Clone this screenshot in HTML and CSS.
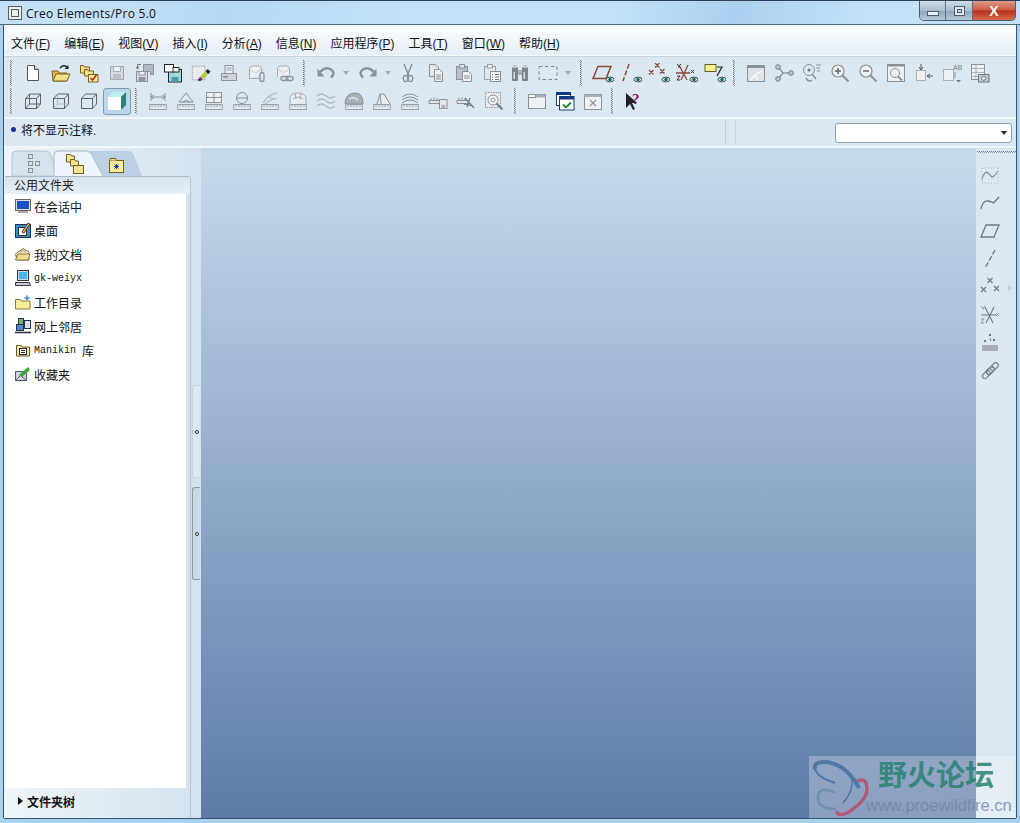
FILE: index.html
```html
<!DOCTYPE html>
<html lang="zh-CN">
<head>
  <meta charset="UTF-8">
  <title>Creo Elements/Pro 5.0</title>
  <link rel="stylesheet" href="styles.css">
</head>
<body>

<!-- icon sprite -->
<svg class="sprite" xmlns="http://www.w3.org/2000/svg">
  <symbol id="eye" viewBox="0 0 20 20"><ellipse cx="16" cy="16.5" rx="4" ry="2.4" fill="#cfe0dc" stroke="#2d5a52"/><circle cx="16" cy="16.5" r="1.7" fill="#1f6b5c"/></symbol>

  <symbol id="new" viewBox="0 0 20 20"><path d="M4.5 2.5h7l4 4v11h-11z" fill="#fff" stroke="#555"/><path d="M11.5 2.5v4h4" fill="#ddd" stroke="#555"/></symbol>
  <symbol id="open" viewBox="0 0 20 20"><path d="M1 8h6l1 2h8v8H2z" fill="#d9b548" stroke="#7a6420"/><path d="M2 18l3-7h14l-3 7z" fill="#f7e08a" stroke="#7a6420"/><path d="M9 5q3-4 7-1" fill="none" stroke="#222" stroke-width="1.4"/><path d="M17.5 2v4h-4z" fill="#222"/></symbol>
  <symbol id="workdir" viewBox="0 0 20 20"><path d="M1.5 2.5h3l1 1.5h5v6h-9z" fill="#f1de88" stroke="#7a6420"/><path d="M5.5 6.5h3l1 1.5h5v5h-9z" fill="#f4e28e" stroke="#7a6420"/><rect x="9.5" y="11.5" width="9.5" height="7.5" fill="#f8eea8" stroke="#7a6420"/><path d="M11.5 15l2 2 4-5" fill="none" stroke="#c0280f" stroke-width="1.6"/></symbol>
  <symbol id="save" viewBox="0 0 20 20"><path d="M3.5 3.5h13v13h-13z" fill="#d5dbe0" stroke="#9aa2a8"/><rect x="6.5" y="3.5" width="7" height="5" fill="#eef1f3" stroke="#a6adb3"/><rect x="6" y="11" width="8" height="5.5" fill="#b8bfc5"/></symbol>
  <symbol id="savecopy" viewBox="0 0 20 20"><path d="M8.5 1.5h10v10h-3v-3h-7z" fill="#b3babf" stroke="#8a9298"/><rect x="1.5" y="8.5" width="11" height="10" fill="#d5dbe0" stroke="#8a9298"/><rect x="4" y="8.5" width="6" height="3.5" fill="#eef1f3" stroke="#8a9298"/><rect x="3.5" y="14" width="7" height="4.5" fill="#8f979d"/><path d="M6 1.5H2.5v3" fill="none" stroke="#777"/><path d="M.5 4h4l-2 2.5z" fill="#777"/></symbol>
  <symbol id="backup" viewBox="0 0 20 20"><rect x="5.5" y="6.5" width="13" height="12.5" fill="#9fdcde" stroke="#222"/><rect x="8.5" y="14" width="7" height="5" fill="#4e9ca6"/><rect x="1.5" y="1.5" width="9" height="7.5" fill="#fff" stroke="#222"/><rect x="10" y="4.5" width="6" height="4.5" fill="#fff" stroke="#222"/></symbol>
  <symbol id="rename" viewBox="0 0 22 20"><rect x="1.5" y="2.5" width="14" height="15" fill="#e9ecef" stroke="#999" stroke-dasharray="1.5 1"/><path d="M7 18l3-4 3 3-3 2z" fill="#5b2b8e"/><path d="M10 14l6-6 3 3-6 6z" fill="#b8c93a"/><path d="M16 8l2.5-2.5 3 3L19 11z" fill="#222"/></symbol>
  <symbol id="print" viewBox="0 0 20 20"><rect x="6" y="2.5" width="8" height="8" fill="#eef1f3" stroke="#8a9298"/><path d="M7.5 5h5M7.5 7h5" stroke="#9aa2a8"/><path d="M2.5 10.5h15v7h-15z" fill="#cdd3d8" stroke="#8a9298"/><rect x="4" y="13" width="5" height="1.5" fill="#8a9298"/></symbol>
  <symbol id="mail" viewBox="0 0 20 20"><path d="M2.5 16V6q0-3 3-3h6q3 0 3 3v4" fill="#eef1f3" stroke="#a6adb3"/><path d="M2.5 15.5h10" stroke="#a6adb3"/><path d="M2.5 6l6 4 6-4" fill="none" stroke="#c2c8cd"/><rect x="13" y="9.5" width="4" height="9" rx="2" fill="none" stroke="#8a9298" stroke-width="1.3"/></symbol>
  <symbol id="maillink" viewBox="0 0 20 20"><path d="M2.5 14V6q0-3 3-3h6q3 0 3 3v6" fill="#eef1f3" stroke="#a6adb3"/><path d="M2.5 6l6 4 6-4" fill="none" stroke="#c2c8cd"/><rect x="6" y="13.5" width="7" height="4" rx="2" fill="none" stroke="#8a9298" stroke-width="1.3"/><rect x="11" y="13.5" width="7" height="4" rx="2" fill="none" stroke="#8a9298" stroke-width="1.3"/></symbol>
  <symbol id="undo" viewBox="0 0 20 20"><path d="M4 9q6-6 11-2.5t0 8" fill="none" stroke="#8a9298" stroke-width="2.4"/><path d="M1.5 5.5v8h7z" fill="#8a9298"/></symbol>
  <symbol id="redo" viewBox="0 0 20 20"><path d="M16 9q-6-6-11-2.5t0 8" fill="none" stroke="#8a9298" stroke-width="2.4"/><path d="M18.5 5.5v8h-7z" fill="#8a9298"/></symbol>
  <symbol id="cut" viewBox="0 0 20 20"><path d="M6 1l5 12M14 1L9 13" stroke="#8a9298" stroke-width="1.5" fill="none"/><ellipse cx="7.5" cy="15.5" rx="2.2" ry="3.2" fill="none" stroke="#8a9298" stroke-width="1.3"/><ellipse cx="12.5" cy="15.5" rx="2.2" ry="3.2" fill="none" stroke="#8a9298" stroke-width="1.3"/></symbol>
  <symbol id="copy" viewBox="0 0 20 20"><path d="M3.5 1.5h6l3 3v9h-9z" fill="#e3e7ea" stroke="#8a9298"/><path d="M8.5 6.5h5l3 3v9h-8z" fill="#eef1f3" stroke="#8a9298"/><path d="M10 12h5M10 14h5M10 16h5" stroke="#8a9298"/></symbol>
  <symbol id="paste" viewBox="0 0 20 20"><rect x="2.5" y="3.5" width="11" height="13" fill="#b8bfc5" stroke="#8a9298"/><rect x="5.5" y="1.5" width="5" height="3.5" fill="#dde2e6" stroke="#8a9298"/><path d="M8.5 8.5h6l3 3v7h-9z" fill="#eef1f3" stroke="#8a9298"/><path d="M10 13h6M10 15h6" stroke="#8a9298"/></symbol>
  <symbol id="pastesp" viewBox="0 0 20 20"><rect x="2.5" y="3.5" width="11" height="13" fill="#e3e7ea" stroke="#9aa2a8"/><rect x="5.5" y="1.5" width="5" height="3.5" fill="#eef1f3" stroke="#9aa2a8"/><rect x="8.5" y="8.5" width="10" height="10" fill="#f2f4f6" stroke="#8a9298"/><path d="M10.5 11v1M10.5 13.5v1M10.5 16v1M13 11.5h4M13 14h4M13 16.5h4" stroke="#707a80"/></symbol>
  <symbol id="find" viewBox="0 0 20 20"><rect x="2" y="4" width="6" height="14" rx="1" fill="#7d858b"/><rect x="12" y="4" width="6" height="14" rx="1" fill="#7d858b"/><rect x="8" y="7" width="4" height="5" fill="#aab1b6"/><rect x="3" y="2" width="4" height="3" fill="#c2c8cd"/><rect x="13" y="2" width="4" height="3" fill="#c2c8cd"/><rect x="3.5" y="9" width="1.5" height="7" fill="#d5dbe0"/><rect x="13.5" y="9" width="1.5" height="7" fill="#d5dbe0"/></symbol>
  <symbol id="selbox" viewBox="0 0 20 20"><rect x="1" y="3.5" width="18" height="13" fill="none" stroke="#7f878d" stroke-dasharray="3.5 2.5"/></symbol>

  <symbol id="dplane" viewBox="0 0 22 20"><path d="M6 3.5h13l-5 12H1z" fill="none" stroke="#8a4a34" stroke-width="1.5"/><use href="#eye" x="2" y="0" width="20" height="20"/></symbol>
  <symbol id="daxis" viewBox="0 0 22 20"><path d="M9 1L3 18" stroke="#8a4a34" stroke-width="1.5" stroke-dasharray="5 2"/><use href="#eye" x="2" y="0" width="20" height="20"/></symbol>
  <symbol id="dpoint" viewBox="0 0 22 20"><path d="M7 0l4.500 4.500M11.500 0L7 4.500M1 7l4.500 4.500M5.500 7L1 11.500M12 6l4.500 4.500M16.500 6L12 10.500" stroke="#8a4a34" stroke-width="1.3"/><use href="#eye" x="2" y="0" width="20" height="20"/></symbol>
  <symbol id="dcsys" viewBox="0 0 22 20"><path d="M0 10h14M3 2l8 15M12 2L5 17" stroke="#8a4a34" stroke-width="1.3"/><path d="M1 1l2 2 2-2M3 3v2M1 13h3l-3 4h3" fill="none" stroke="#333"/><path d="M15 7l3 3M18 7l-3 3" stroke="#333"/><use href="#eye" x="2" y="0" width="20" height="20"/></symbol>
  <symbol id="dnote" viewBox="0 0 22 20"><rect x="1" y="1.5" width="11" height="7" fill="#f8f28e" stroke="#665f20"/><path d="M13 4h5l-5 9" fill="none" stroke="#222" stroke-width="1.2"/><use href="#eye" x="2" y="0" width="20" height="20"/></symbol>

  <symbol id="repaint" viewBox="0 0 20 20"><rect x="1.5" y="2.5" width="17" height="16" fill="#dfe3e6" stroke="#8a9298"/><rect x="1.5" y="2.5" width="17" height="2.5" fill="#8a9298"/><path d="M5 17l5-6 7-3M9 12l3 5" fill="none" stroke="#fff" stroke-width="1.3"/></symbol>
  <symbol id="tree" viewBox="0 0 20 20"><circle cx="4" cy="4" r="2.3" fill="#c2c8cd" stroke="#707a80"/><circle cx="4" cy="16" r="2.3" fill="#c2c8cd" stroke="#707a80"/><circle cx="17" cy="10" r="2.3" fill="#c2c8cd" stroke="#707a80"/><path d="M5.5 5.500L9 10h6M9 10l-3.500 4.500" fill="none" stroke="#707a80" stroke-width="1.2"/></symbol>
  <symbol id="spin" viewBox="0 0 20 20"><circle cx="7" cy="7" r="5.500" fill="none" stroke="#8a9298"/><circle cx="7" cy="7" r="1.5" fill="#707a80"/><path d="M14 2h5M14 5h4M15 8h3" stroke="#8a9298"/><path d="M10 11l4 5" stroke="#8a9298" stroke-width="1.5"/><path d="M4 15q3 5 6 2" fill="none" stroke="#8a9298" stroke-width="1.5"/></symbol>
  <symbol id="zoomin" viewBox="0 0 20 20"><circle cx="8" cy="8" r="6" fill="#eef1f3" stroke="#8a9298" stroke-width="1.2"/><path d="M5 8h6M8 5v6" stroke="#666" stroke-width="1.5"/><path d="M12.5 12.5l6 6" stroke="#8a9298" stroke-width="2"/></symbol>
  <symbol id="zoomout" viewBox="0 0 20 20"><circle cx="8" cy="8" r="6" fill="#eef1f3" stroke="#8a9298" stroke-width="1.2"/><path d="M5 8h6" stroke="#666" stroke-width="1.5"/><path d="M12.5 12.5l6 6" stroke="#8a9298" stroke-width="2"/></symbol>
  <symbol id="refit" viewBox="0 0 20 20"><rect x="1.5" y="1.5" width="17" height="17" fill="#eef1f3" stroke="#8a9298"/><rect x="1.5" y="1.5" width="17" height="2" fill="#8a9298"/><circle cx="9" cy="10" r="4.5" fill="none" stroke="#8a9298"/><path d="M12 13.5l4 4" stroke="#8a9298" stroke-width="1.8"/></symbol>
  <symbol id="orient" viewBox="0 0 20 20"><rect x="2.5" y="7.5" width="9" height="10" fill="#eef1f3" stroke="#aab1b6"/><path d="M7 1v5M5 4l2 3 2-3M19 13h-5M16 11l-3 2 3 2" fill="none" stroke="#555"/></symbol>
  <symbol id="views" viewBox="0 0 20 20"><rect x="1.5" y="6.5" width="10" height="11" fill="#eef1f3" stroke="#aab1b6"/><path d="M13 9v6" stroke="#8a9298"/><path d="M14 17h5l-2.5 2.5z" fill="#707a80"/></symbol>
  <symbol id="layers" viewBox="0 0 20 20"><rect x="1.5" y="1.5" width="13" height="15" fill="#eef1f3" stroke="#8a9298"/><path d="M1.5 5.5h13M1.5 9.5h13M1.5 13.5h13M6 1.5v15" stroke="#aab1b6"/><rect x="8.5" y="11.5" width="10.5" height="7.5" fill="#c2c8cd" stroke="#707a80"/><circle cx="13.7" cy="15.3" r="2" fill="#eef1f3" stroke="#707a80"/></symbol>

  <symbol id="cube-wire" viewBox="0 0 20 20"><path d="M2.5 7.5h11v10h-11zM2.5 7.5l4-4.5h11v10l-4 4.5M13.5 7.5l4-4.5M6.5 3v10h11M6.5 13l-4 4.5" fill="none" stroke="#555" stroke-width=".9"/></symbol>
  <symbol id="cube-hid" viewBox="0 0 20 20"><path d="M2.5 7.5h11v10h-11zM2.5 7.5l4-4.5h11v10l-4 4.5M13.5 7.5l4-4.5" fill="none" stroke="#555" stroke-width=".9"/><path d="M6.5 3v10h11M6.5 13l-4 4.5" fill="none" stroke="#aab1b6" stroke-width=".9"/></symbol>
  <symbol id="cube-line" viewBox="0 0 20 20"><path d="M2.5 7.5h11v10h-11zM2.5 7.5l4-4.5h11v10l-4 4.5M13.5 7.5l4-4.5" fill="none" stroke="#555" stroke-width=".9"/></symbol>
  <symbol id="cube-shade" viewBox="0 0 20 20"><path d="M1 6h13v13H1z" fill="#fff"/><path d="M1 6l4-5h14l-5 5z" fill="#bfeeee"/><path d="M14 6l5-5v13l-5 5z" fill="#2f7f7a"/></symbol>

  <symbol id="ruler" viewBox="0 0 20 20"><path d="M1.5 13.5h17v5h-17z" fill="#e3e8ec" stroke="#9aa2a8"/><path d="M4 14v2M7 14v2M10 14v2M13 14v2M16 14v2" stroke="#9aa2a8"/></symbol>
  <symbol id="m-dim" viewBox="0 0 20 20"><path d="M3 2v8M17 2v8M3 6h14M3 6l3-2M3 6l3 2M17 6l-3-2M17 6l-3 2" fill="none" stroke="#8a9298"/><use href="#ruler"/></symbol>
  <symbol id="m-angle" viewBox="0 0 20 20"><path d="M10 2L3 11h14zM6 11q4-3 8 0" fill="none" stroke="#8a9298"/><use href="#ruler"/></symbol>
  <symbol id="m-area" viewBox="0 0 20 20"><rect x="2.5" y="1.5" width="15" height="10" fill="#eef1f3" stroke="#8a9298"/><path d="M2.5 6.5h15M10 1.5v10M5 6.5l-1-1M15 6.5l1-1" stroke="#8a9298"/><use href="#ruler"/></symbol>
  <symbol id="m-dia" viewBox="0 0 20 20"><circle cx="10" cy="7" r="5.5" fill="none" stroke="#8a9298"/><path d="M4.5 7h11" stroke="#8a9298"/><use href="#ruler"/></symbol>
  <symbol id="m-curve" viewBox="0 0 20 20"><path d="M3 12Q8 3 18 2M5 13Q11 8 18 7M8 5l7 4" fill="none" stroke="#b4bbc0" stroke-width="1.2"/><use href="#ruler"/></symbol>
  <symbol id="m-surf" viewBox="0 0 20 20"><path d="M2 13V8q0-6 8-6t8 6v5" fill="#e9ecef" stroke="#a0a8ae"/><path d="M5 8q5-4 10 0M7 3l1 5M13 3l-1 5" fill="none" stroke="#a0a8ae"/><use href="#ruler"/></symbol>
  <symbol id="m-wave" viewBox="0 0 20 20"><path d="M1 5q4.5-4 9 0t9 0M1 10q4.5-4 9 0t9 0M1 15q4.5-4 9 0t9 0" fill="none" stroke="#b4bbc0" stroke-width="1.2"/></symbol>
  <symbol id="m-mass" viewBox="0 0 20 20"><path d="M1 13q0-10 9-11t9 11z" fill="#a8afb5" stroke="#8a9298"/><path d="M5 8q5-3 9 1" fill="none" stroke="#d5dbe0" stroke-width="2"/><use href="#ruler"/></symbol>
  <symbol id="m-draft" viewBox="0 0 20 20"><path d="M5 13L8 3h4l6 10M8 3l1 10" fill="#e9ecef" stroke="#8a9298"/><use href="#ruler"/></symbol>
  <symbol id="m-offset" viewBox="0 0 20 20"><path d="M2 6q8-6 16 0M2 9q8-6 16 0M2 12q8-6 16 0" fill="none" stroke="#8a9298"/><use href="#ruler"/></symbol>
  <symbol id="m-disk" viewBox="0 0 20 20"><path d="M1 9.5h11v3H1zM3 9.5V7M6 9.5V6.5M9 9.5V7" fill="#dfe3e6" stroke="#8a9298"/><rect x="11.5" y="8.5" width="7.5" height="9" fill="#e3e8ec" stroke="#8a9298"/><rect x="13.5" y="14" width="3.5" height="3.5" fill="#aab1b6"/></symbol>
  <symbol id="m-tool" viewBox="0 0 20 20"><path d="M1 9.5h11v3H1zM3 9.5V7M6 9.5V6.5M9 9.5V7" fill="#dfe3e6" stroke="#8a9298"/><path d="M9 7l9 10M14 7l-3 9M8 13l9 2" stroke="#707a80" stroke-width="1.2"/></symbol>
  <symbol id="m-search" viewBox="0 0 20 20"><rect x="1.5" y="1.5" width="15" height="15" fill="#e9ecef" stroke="#8a9298" stroke-dasharray="1.5 1"/><circle cx="9" cy="9" r="5" fill="#f5f6f7" stroke="#8a9298"/><circle cx="9" cy="9" r="2" fill="none" stroke="#8a9298"/><path d="M12.5 12.5l6 6" stroke="#707a80" stroke-width="2"/></symbol>

  <symbol id="win-new" viewBox="0 0 20 20"><rect x="1.5" y="3.5" width="17" height="14" fill="#eef1f3" stroke="#8a9298"/><rect x="1.5" y="3.5" width="7" height="3" fill="#fff" stroke="#8a9298"/><rect x="8.5" y="3.5" width="10" height="3" fill="#aab1b6"/></symbol>
  <symbol id="win-active" viewBox="0 0 20 20"><rect x="1.5" y="1.5" width="14" height="13" fill="#fff" stroke="#103a80"/><rect x="1.5" y="1.5" width="14" height="2.5" fill="#103a80"/><rect x="4.5" y="5.5" width="14.5" height="13.5" fill="#fff" stroke="#103a80"/><rect x="4.5" y="5.5" width="14.5" height="3" fill="#103a80"/><path d="M8 13.5l3 3 5-5" fill="none" stroke="#1a8a28" stroke-width="1.8"/></symbol>
  <symbol id="win-close" viewBox="0 0 20 20"><rect x="1.5" y="3.5" width="17" height="15" fill="#eef1f3" stroke="#8a9298"/><rect x="1.5" y="3.5" width="17" height="2.5" fill="#aab1b6"/><path d="M7 9l6 6M13 9l-6 6" stroke="#8a9298" stroke-width="1.3"/></symbol>
  <symbol id="arrow-cursor" viewBox="0 0 20 20"><path d="M2 2v15l4-4 3 6 2-1-3-6h5z" fill="#222"/></symbol>

  <symbol id="r-sketch" viewBox="0 0 20 20"><path d="M2 14q3-9 6-6t4 4 6-6" fill="none" stroke="#8a9298" stroke-width="1.2"/><path d="M2 3h16M2 18h16M2 3v15M18 3v15" fill="none" stroke="#a6adb3" stroke-dasharray="1 2"/></symbol>
  <symbol id="r-curve" viewBox="0 0 20 20"><path d="M1 16q2-9 7-8t5 2 6-6" fill="none" stroke="#707a80" stroke-width="1.3"/></symbol>
  <symbol id="r-plane" viewBox="0 0 20 20"><path d="M6 4h13l-5 12H1z" fill="none" stroke="#707a80" stroke-width="1.3"/></symbol>
  <symbol id="r-axis" viewBox="0 0 20 20"><path d="M15 1L5 19" stroke="#707a80" stroke-width="1.4" stroke-dasharray="5 2"/></symbol>
  <symbol id="r-point" viewBox="0 0 20 20"><path d="M7.5 1l5 5M12.5 1l-5 5M1 10l5 5M6 10l-5 5M14 9l5 5M19 9l-5 5" stroke="#707a80" stroke-width="1.2"/></symbol>
  <symbol id="r-csys" viewBox="0 0 20 20"><path d="M1 10h15M5 2l8 16M14 2L6 18" stroke="#707a80" stroke-width="1.1"/><path d="M1 1l2 2 2-2M3 3v2M1 14h3l-3 4h3M16 8l3 3M19 8l-3 3" fill="none" stroke="#8a9298" stroke-width=".9"/></symbol>
  <symbol id="r-ptfield" viewBox="0 0 20 20"><path d="M9 1l2 2M11 1L9 3M4 7l2 2M6 7L4 9M13 6l2 2M15 6l-2 2M10 5l1 3" stroke="#707a80"/><rect x="2" y="12" width="16" height="6" fill="#a9b0b5"/></symbol>
  <symbol id="r-chain" viewBox="0 0 20 20"><rect x="-4" y="-2.5" width="9" height="5" rx="2.5" transform="translate(6 14) rotate(-45)" fill="none" stroke="#8a9298" stroke-width="1.5"/><rect x="-4" y="-2.5" width="9" height="5" rx="2.5" transform="translate(10 10) rotate(-45)" fill="none" stroke="#707a80" stroke-width="1.5"/><rect x="-4" y="-2.5" width="9" height="5" rx="2.5" transform="translate(14 6) rotate(-45)" fill="none" stroke="#8a9298" stroke-width="1.5"/></symbol>

  <symbol id="l-session" viewBox="0 0 16 16"><rect x=".5" y="1.5" width="15" height="11" fill="#ddd" stroke="#666"/><rect x="2" y="3" width="12" height="8" fill="#1a52c0"/><rect x="3" y="13" width="10" height="2" fill="#aaa"/></symbol>
  <symbol id="l-desktop" viewBox="0 0 16 16"><rect x=".5" y="2.5" width="15" height="13" fill="#3a8fc0" stroke="#235"/><rect x="3.5" y="5.5" width="8" height="8" fill="#fff" stroke="#333"/><path d="M7 10l6-9 2 1-6 9z" fill="#e8b830" stroke="#533"/></symbol>
  <symbol id="l-docs" viewBox="0 0 16 16"><path d="M.5 8L8 2.5 14 6v8H2z" fill="#f4eabc" stroke="#8a7a3a"/><path d="M.5 14L3 8h12l-2 6z" fill="#f2dc90" stroke="#8a7a3a"/><path d="M5 6.5L8 4.5l3 2" fill="none" stroke="#99a"/></symbol>
  <symbol id="l-comp" viewBox="0 0 16 16"><rect x="2.5" y=".5" width="11" height="10" fill="#cfd5dd" stroke="#334"/><rect x="4" y="2" width="8" height="7" fill="#3fb8e8"/><path d="M.5 12.5h14l1 3H.5z" fill="#c8ccd4" stroke="#334"/></symbol>
  <symbol id="l-workdir" viewBox="0 0 16 16"><path d="M.5 5.5h5l1 1.5h8.500v8H.5z" fill="#f8ec98" stroke="#8a7a3a"/><path d="M12 .5l1 2.5 2.5 1-2.500 1-1 2.500-1-2.500-2.500-1 2.500-1z" fill="#3a90d8"/></symbol>
  <symbol id="l-net" viewBox="0 0 16 16"><rect x="3.5" y=".5" width="5" height="7" fill="#6fb36f" stroke="#234"/><rect x="9.5" y="2.5" width="6" height="8" fill="#dde" stroke="#234"/><rect x="1.5" y="6.5" width="7" height="6" fill="#4c84c8" stroke="#234"/><path d="M0 14.5h16" stroke="#234" stroke-width="1.5"/></symbol>
  <symbol id="l-manikin" viewBox="0 0 16 16"><path d="M1.5 3.5h5l1 1.5h7v9h-13z" fill="#f4e8a4" stroke="#665c20"/><rect x="4.5" y="6.5" width="7" height="6" fill="#fff" stroke="#222"/><path d="M6 8.5h4M6 10.5h4" stroke="#222"/></symbol>
  <symbol id="l-fav" viewBox="0 0 16 16"><path d="M.5 5.5h11v9H.5z" fill="#cfd5e6" stroke="#556"/><path d="M.5 14.5l5-5 6 5" fill="none" stroke="#556"/><path d="M4 9l9-8 2 3-8 7z" fill="#3aa838"/></symbol>
</svg>

<div class="window">
  <header class="titlebar">
    <span class="app-icon"></span>
    <span class="app-title">Creo Elements/Pro 5.0</span>
    <div class="win-buttons">
      <span class="win-btn min"><i></i></span>
      <span class="win-btn max"><i></i></span>
      <span class="win-btn close">X</span>
    </div>
  </header>

  <div class="client">
    <nav class="menubar">
      <span>文件(<u>F</u>)</span>
      <span>编辑(<u>E</u>)</span>
      <span>视图(<u>V</u>)</span>
      <span>插入(<u>I</u>)</span>
      <span>分析(<u>A</u>)</span>
      <span>信息(<u>N</u>)</span>
      <span>应用程序(<u>P</u>)</span>
      <span>工具(<u>T</u>)</span>
      <span>窗口(<u>W</u>)</span>
      <span>帮助(<u>H</u>)</span>
    </nav>

    <div class="toolbars">
      <div class="toolrow">
        <span class="grip"></span>
        <span class="tool"><svg><use href="#new"/></svg></span>
        <span class="tool"><svg><use href="#open"/></svg></span>
        <span class="tool"><svg><use href="#workdir"/></svg></span>
        <span class="tool"><svg><use href="#save"/></svg></span>
        <span class="tool"><svg><use href="#savecopy"/></svg></span>
        <span class="tool"><svg><use href="#backup"/></svg></span>
        <span class="tool"><svg><use href="#rename"/></svg></span>
        <span class="tool"><svg><use href="#print"/></svg></span>
        <span class="tool"><svg><use href="#mail"/></svg></span>
        <span class="tool"><svg><use href="#maillink"/></svg></span>
        <span class="sep"></span>
        <span class="tool"><svg><use href="#undo"/></svg></span>
        <span class="drop"></span>
        <span class="tool"><svg><use href="#redo"/></svg></span>
        <span class="drop narrow"></span>
        <span class="tool"><svg><use href="#cut"/></svg></span>
        <span class="tool"><svg><use href="#copy"/></svg></span>
        <span class="tool"><svg><use href="#paste"/></svg></span>
        <span class="tool"><svg><use href="#pastesp"/></svg></span>
        <span class="tool"><svg><use href="#find"/></svg></span>
        <span class="tool"><svg><use href="#selbox"/></svg></span>
        <span class="drop"></span>
        <span class="sep"></span>
        <span class="tool wide"><svg><use href="#dplane"/></svg></span>
        <span class="tool wide"><svg><use href="#daxis"/></svg></span>
        <span class="tool wide"><svg><use href="#dpoint"/></svg></span>
        <span class="tool wide"><svg><use href="#dcsys"/></svg></span>
        <span class="tool wide"><svg><use href="#dnote"/></svg></span>
        <span class="sep"></span>
        <span class="tool"><svg><use href="#repaint"/></svg></span>
        <span class="tool"><svg><use href="#tree"/></svg></span>
        <span class="tool"><svg><use href="#spin"/></svg></span>
        <span class="tool"><svg><use href="#zoomin"/></svg></span>
        <span class="tool"><svg><use href="#zoomout"/></svg></span>
        <span class="tool"><svg><use href="#refit"/></svg></span>
        <span class="tool"><svg><use href="#orient"/></svg></span>
        <span class="tool"><svg viewBox="0 0 20 20"><use href="#views"/><text x="11" y="7" class="ab">AB</text></svg></span>
        <span class="tool"><svg><use href="#layers"/></svg></span>
      </div>
      <div class="toolrow">
        <span class="grip"></span>
        <span class="tool"><svg><use href="#cube-wire"/></svg></span>
        <span class="tool"><svg><use href="#cube-hid"/></svg></span>
        <span class="tool"><svg><use href="#cube-line"/></svg></span>
        <span class="tool active"><svg><use href="#cube-shade"/></svg></span>
        <span class="sep"></span>
        <span class="tool"><svg><use href="#m-dim"/></svg></span>
        <span class="tool"><svg><use href="#m-angle"/></svg></span>
        <span class="tool"><svg><use href="#m-area"/></svg></span>
        <span class="tool"><svg><use href="#m-dia"/></svg></span>
        <span class="tool"><svg><use href="#m-curve"/></svg></span>
        <span class="tool"><svg><use href="#m-surf"/></svg></span>
        <span class="tool"><svg><use href="#m-wave"/></svg></span>
        <span class="tool"><svg><use href="#m-mass"/></svg></span>
        <span class="tool"><svg><use href="#m-draft"/></svg></span>
        <span class="tool"><svg><use href="#m-offset"/></svg></span>
        <span class="tool"><svg><use href="#m-disk"/></svg></span>
        <span class="tool"><svg><use href="#m-tool"/></svg></span>
        <span class="tool"><svg><use href="#m-search"/></svg></span>
        <span class="sep wide-sep"></span>
        <span class="tool"><svg><use href="#win-new"/></svg></span>
        <span class="tool"><svg><use href="#win-active"/></svg></span>
        <span class="tool"><svg><use href="#win-close"/></svg></span>
        <span class="sep"></span>
        <span class="tool"><svg viewBox="0 0 20 20"><use href="#arrow-cursor"/><text x="8" y="13" class="q">?</text></svg></span>
      </div>
    </div>

    <div class="statusbar">
      <span class="status-dot"></span>
      <span class="status-text">将不显示注释.</span>
      <span class="status-cell"></span>
      <div class="combo"><span class="combo-arrow"></span></div>
    </div>

    <main class="workspace">
      <aside class="navigator">
        <svg class="nav-tabs" viewBox="0 0 197 28">
          <path d="M8 28V7q0-4 4-4h29q4 0 6 4l8 21z" fill="#d3e2ed" stroke="#b4c6d4"/>
          <path d="M92 28L84 7q-2-4 2-4h38q4 0 6 4l8 21z" fill="#bcd2e4"/>
          <path d="M50 28V7q0-4 4-4h28q4 0 6 4l11 21" fill="#eef5fa" stroke="#a8bac8"/>
          <g fill="none" stroke="#8a9298"><rect x="24.5" y="6.5" width="4" height="4"/><rect x="24.5" y="13.5" width="4" height="4"/><rect x="24.5" y="20.5" width="4" height="4"/><rect x="31.5" y="13.5" width="4" height="4"/></g>
          <g fill="#f4e68e" stroke="#6d6020"><path d="M62.5 6.5h4l1 1.5h3v6h-8z"/><path d="M66.5 11.5h4l1 1.5h3v5h-8z"/><rect x="69.5" y="17.5" width="10" height="8"/></g>
          <rect x="105.5" y="12.5" width="14" height="12" fill="#f8ec98" stroke="#6d6020"/>
          <path d="M105.5 12.5l1-2h5l1 2" fill="#f4e68e" stroke="#6d6020"/>
          <path d="M110 18.5h5M112.5 16v5M110.5 16.5l4 4M114.5 16.5l-4 4" stroke="#2233a0"/>
        </svg>
        <div class="nav-body">
          <div class="nav-panel">
            <div class="nav-head">公用文件夹</div>
            <ul class="nav-list">
              <li><svg><use href="#l-session"/></svg>在会话中</li>
              <li><svg><use href="#l-desktop"/></svg>桌面</li>
              <li><svg><use href="#l-docs"/></svg>我的文档</li>
              <li><svg><use href="#l-comp"/></svg><span class="mono">gk-weiyx</span></li>
              <li><svg><use href="#l-workdir"/></svg>工作目录</li>
              <li><svg><use href="#l-net"/></svg>网上邻居</li>
              <li><svg><use href="#l-manikin"/></svg><span class="mono">Manikin </span>库</li>
              <li><svg><use href="#l-fav"/></svg>收藏夹</li>
            </ul>
            <div class="nav-foot"><span class="foot-arrow"></span>文件夹树</div>
          </div>
          <div class="sashes">
            <span class="sash faint"><i></i></span>
            <span class="sash"><i></i></span>
          </div>
        </div>
      </aside>

      <section class="canvas"></section>

      <aside class="rightbar">
        <span class="rgrip"></span>
        <svg><use href="#r-sketch"/></svg>
        <svg><use href="#r-curve"/></svg>
        <svg><use href="#r-plane"/></svg>
        <svg><use href="#r-axis"/></svg>
        <svg><use href="#r-point"/></svg>
        <svg><use href="#r-csys"/></svg>
        <svg><use href="#r-ptfield"/></svg>
        <svg><use href="#r-chain"/></svg>
        <span class="r-more"></span>
      </aside>
    </main>
  </div>

  <!-- forum stamp over the shot -->
  <div class="stamp">
    <svg class="stamp-logo" viewBox="0 0 58 58">
      <path d="M4 10Q2 2 16 3q20 3 32 26" fill="none" stroke="#4f78a6" stroke-width="4"/>
      <path d="M4 10q2 8 20 14" fill="none" stroke="#4f78a6" stroke-width="2"/>
      <path d="M46 22q10-4 10 8T36 54q-10 4-10-2" fill="none" stroke="#b05a78" stroke-width="3.5"/>
      <path d="M24 34Q8 26 7 38t18 12" fill="none" stroke="#6f8fb4" stroke-width="2.5"/>
      <path d="M40 18q4 12-8 26" fill="none" stroke="#4f78a6" stroke-width="1.5"/>
    </svg>
    <div class="stamp-name">野火论坛</div>
    <div class="stamp-url">www.proewildfire.cn</div>
  </div>
</div>

</body>
</html>
```
FILE: styles.css
```css
* {margin:0;padding:0;box-sizing:border-box;}
html, body {
  width: 1020px;
  height: 823px;
  overflow: hidden;
}
body {
  font-family: "Liberation Sans", "Noto Sans CJK SC", sans-serif;
  font-size: 12px;
  color: #111;
}
.sprite { position: absolute; width: 0; height: 0; }
.ab { font: 7px "Liberation Sans", sans-serif; fill: #707a80; }
.q { font: bold 15px "Liberation Serif", serif; fill: #8a0a78; }

.window {
  position: relative;
  width: 1020px;
  height: 823px;
  display: flex;
  flex-direction: column;
  background: #a9d0ec;
  border-top: 1px solid #2c3f55;
  padding-bottom: 5px;
}

/* title bar */
.titlebar {
  height: 24px;
  flex: none;
  display: flex;
  align-items: center;
  padding: 1px 0 0 8px;
  background:
    linear-gradient(100deg, rgba(255,255,255,0) 60%, rgba(150,195,235,.55) 72%, rgba(255,255,255,0) 85%),
    linear-gradient(100deg, rgba(255,255,255,0) 10%, rgba(170,208,240,.5) 22%, rgba(255,255,255,0) 40%),
    #c4e1f6;
  border-bottom: 1px solid #4d6a84;
}
.app-icon {
  width: 14px;
  height: 14px;
  background: #eef0e8;
  border: 1px solid #51606c;
  box-shadow: inset 0 0 0 2px #eef0e8, inset 0 0 0 3px #51606c;
}
.app-title {
  margin-left: 4px;
  font-family: "Open Sans", sans-serif;
  font-size: 12px;
  letter-spacing: .25px;
  color: #111;
}
.win-buttons {
  margin: -1px 4px 0 auto;
  align-self: flex-start;
  height: 20px;
  display: flex;
  border: 1px solid #4d5d6e;
  border-top: none;
  border-radius: 0 0 5px 5px;
  overflow: hidden;
}
.win-btn {
  display: flex;
  align-items: center;
  justify-content: center;
  background: linear-gradient(#cfdbe6, #a9bccd 50%, #8ea6ba 52%, #b5c8d8);
  border-right: 1px solid #5d7084;
}
.win-btn.min { width: 26px; }
.win-btn.max { width: 27px; }
.win-btn.min i { width: 12px; height: 5px; margin-top: 5px; background: #e8eef3; border: 1px solid #4d5c6c; }
.win-btn.max i { width: 11px; height: 10px; border: 1px solid #4d5c6c; box-shadow: inset 0 0 0 2px #dfe7ee, inset 0 0 0 3px #4d5c6c; background: #c6d3de; }
.win-btn.close {
  width: 42px;
  border-right: none;
  color: #f4f4f4;
  font: bold 14px "Liberation Sans", sans-serif;
  background: linear-gradient(#e09a86, #c85a42 48%, #b8301c 52%, #d86a50);
}

.client {
  flex: 1;
  min-height: 0;
  margin: 0 4px;
  display: flex;
  flex-direction: column;
  background: #dce8f1;
  box-shadow: -1px 0 0 #33536e, 1px 0 0 #33536e, 0 1px 0 #33536e;
}

/* menu */
.menubar {
  height: 31px;
  flex: none;
  display: flex;
  align-items: center;
  gap: 14px;
  padding: 4px 0 0 7px;
  background: linear-gradient(#fbfdfe, #e6eff6);
  border-bottom: 1px solid #f6fafc;
}

/* toolbars */
.toolbars {
  flex: none;
  height: 63px;
  padding-top: 2px;
  background: #dce8f1;
  border-top: 1px solid #c6d6e3;
  border-bottom: 2px solid #f2f7fa;
}
.toolrow {
  height: 28px;
  display: flex;
  align-items: center;
  padding-left: 6px;
}
.grip, .sep {
  height: 26px;
  background-image: linear-gradient(#5f7384 50%, transparent 50%), linear-gradient(#8d9eac 50%, transparent 50%);
  background-size: 1px 2px;
  background-repeat: repeat-y;
}
.grip { width: 9px; background-position: 0 0, 1px 1px; }
.sep { width: 13px; background-position: 4px 0, 5px 1px; }
.wide-sep { width: 15px; background-position: 6px 0, 7px 1px; }
.tool {
  width: 28px;
  height: 27px;
  display: flex;
  align-items: center;
  justify-content: center;
}
.tool svg { width: 20px; height: 20px; }
.tool.wide svg { width: 22px; }
.tool.active {
  background: #bcd6ea;
  border: 1px solid #7f9aae;
  border-radius: 3px;
}
.drop {
  width: 14px;
  height: 4px;
  position: relative;
}
.drop.narrow { width: 12px; }
.drop::before {
  content: "";
  position: absolute;
  left: 3px;
  top: 0;
  border: 3px solid transparent;
  border-top: 4px solid #a3acb3;
  border-bottom: none;
}

/* status */
.statusbar {
  height: 29px;
  flex: none;
  display: flex;
  align-items: center;
  padding: 0 4px 0 7px;
  background: #dce8f1;
  border-bottom: 2px solid #f2f7fa;
}
.status-dot { width: 5px; height: 5px; margin-bottom: 6px; border-radius: 50%; background: #1c2fa8; }
.status-text { margin: 0 0 7px 5px; }
.status-cell {
  margin-left: auto;
  width: 11px;
  height: 25px;
  border-left: 1px solid #c4d3df;
  border-right: 1px solid #c4d3df;
}
.combo {
  position: relative;
  width: 177px;
  height: 20px;
  margin-left: 99px;
  background: #fff;
  border: 1px solid #8fa2b1;
  border-radius: 3px;
}
.combo-arrow {
  position: absolute;
  right: 4px;
  top: 7px;
  border: 3px solid transparent;
  border-top: 4px solid #222;
  border-bottom: none;
}

/* main area */
.workspace {
  flex: 1;
  min-height: 0;
  display: flex;
}
.navigator {
  width: 197px;
  flex: none;
  display: flex;
  flex-direction: column;
  background: linear-gradient(90deg, #eff5f9, #d3e2ee);
}
.nav-tabs { display: block; width: 197px; height: 28px; flex: none; }
.nav-body { flex: 1; min-height: 0; display: flex; }
.nav-panel {
  width: 186px;
  flex: none;
  margin-left: 1px;
  display: flex;
  flex-direction: column;
  border-top: 1px solid #a8bac8;
  border-right: 1px solid #b4c4d0;
  border-radius: 0 3px 0 0;
}
.nav-head {
  height: 17px;
  flex: none;
  padding-left: 9px;
  line-height: 19px;
  color: #222;
  background: linear-gradient(#d4e2ed, #e8f0f6);
}
.nav-list {
  flex: 1;
  list-style: none;
  background: #fff;
  width: 181px;
}
.nav-list li {
  height: 24px;
  display: flex;
  align-items: center;
  padding-left: 10px;
}
.nav-list svg { width: 16px; height: 16px; margin-right: 3px; flex: none; }
.mono { font-family: "Liberation Mono", monospace; font-size: 10px; white-space: pre; }
.nav-foot {
  height: 30px;
  flex: none;
  display: flex;
  align-items: center;
  padding: 0 0 4px 13px;
  font-weight: bold;
  color: #111;
}
.foot-arrow {
  margin-right: 4px;
  border: 4px solid transparent;
  border-left: 5px solid #111;
  border-right: none;
}
.sashes {
  flex: 1;
  display: flex;
  flex-direction: column;
  gap: 9px;
  padding: 209px 0 0 1px;
}
.sash {
  width: 8px;
  height: 93px;
  flex: none;
  display: flex;
  align-items: center;
  justify-content: center;
  background: #cad9e6;
  border: 1px solid #8b99a6;
  border-right: none;
  border-radius: 3px 0 0 3px;
}
.sash.faint { background: #dbe7f1; border-color: #c4d3df; }
.sash i { width: 4px; height: 4px; border: 1px solid #333; border-radius: 50%; background: #fff; }

.canvas {
  flex: 1;
  background: linear-gradient(#c7dbec, #5e7aa8);
}

.rightbar {
  position: relative;
  width: 40px;
  flex: none;
  display: flex;
  flex-direction: column;
  align-items: center;
  gap: 8px;
  padding-top: 3px;
  background: #dce8f1;
}
.rightbar svg { width: 20px; height: 20px; margin-right: 12px; flex: none; }
.rgrip {
  align-self: stretch;
  height: 3px;
  margin: 0 0 3px 1px;
  background-image: linear-gradient(90deg, #5f7384 50%, transparent 50%), linear-gradient(90deg, #8d9eac 50%, transparent 50%);
  background-size: 2px 1px;
  background-repeat: repeat-x;
  background-position: 0 0, 1px 1px;
}
.r-more {
  position: absolute;
  right: 4px;
  top: 137px;
  border: 3px solid transparent;
  border-left: 4px solid #c0ccd6;
  border-right: none;
}

/* stamp */
.stamp {
  position: absolute;
  left: 809px;
  top: 755px;
  width: 206px;
  height: 62px;
  background: rgba(255,255,255,.28);
}
.stamp-logo { position: absolute; left: 2px; top: 3px; width: 58px; height: 58px; }
.stamp-name {
  position: absolute;
  left: 69px;
  top: 2px;
  font-size: 29px;
  font-weight: bold;
  line-height: 36px;
  white-space: nowrap;
  color: rgba(38,130,112,.85);
}
.stamp-url {
  position: absolute;
  left: 57px;
  top: 40px;
  font-size: 16.5px;
  white-space: nowrap;
  color: rgba(112,132,170,.8);
}
```
